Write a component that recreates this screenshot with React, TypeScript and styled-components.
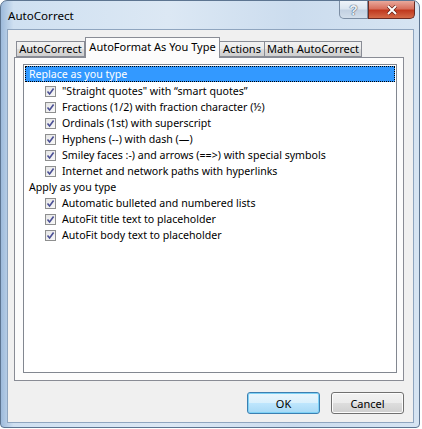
import styled, { createGlobalStyle } from "styled-components";

const GlobalStyle = createGlobalStyle`
    html, body {
        margin: 0;
        padding: 0;
        background: #ffffff;
    }
    body {
        font-family: "Noto Sans", "Liberation Sans", sans-serif;
    }
`;

const StyledWindow = styled.div`
    width: 420px;
    height: 428px;
    box-sizing: border-box;
    display: flex;
    flex-direction: column;
    border: 1px solid #5d7591;
    border-radius: 7px 7px 4px 4px;
    background: linear-gradient(90deg, #9dbadb 0%, #cfe0f1 3%, #dce8f4 40%, #cbdcee 70%, #d6e4f2 100%);
    overflow: hidden;
`;

const StyledTitleBar = styled.div`
    height: 28px;
    display: flex;
    align-items: flex-start;
    justify-content: space-between;
    padding-left: 7px;
`;

const StyledTitle = styled.span`
    font-family: "Noto Sans", sans-serif;
    font-size: 11.6px;
    color: #000;
    line-height: 30px;
`;

const StyledCaptionButtons = styled.div`
    display: flex;
    margin-right: 4px;
`;

const StyledCaptionButton = styled.div<{ $close?: boolean }>`
    width: ${({ $close }) => ($close ? "47px" : "29px")};
    height: 18px;
    box-sizing: border-box;
    display: flex;
    align-items: center;
    justify-content: center;
    border: 1px solid ${({ $close }) => ($close ? "#6b2a22" : "#7c8ea4")};
    border-top: none;
    border-radius: ${({ $close }) => ($close ? "0 0 5px 0" : "0 0 0 5px")};
    background: ${({ $close }) =>
        $close
            ? "linear-gradient(180deg, #e9a99c 0%, #d8705e 45%, #c0391f 55%, #d46a48 100%)"
            : "linear-gradient(180deg, #eef3f9 0%, #dbe5f0 45%, #c3d1e2 55%, #d2deeb 100%)"};
`;

const StyledHelpGlyph = styled.span`
    color: #e9eef5;
    font-family: "Liberation Sans", sans-serif;
    font-weight: bold;
    font-size: 14px;
    text-shadow: 0 0 1px #33475f, 0 0 1px #33475f;
`;

const StyledClient = styled.div`
    flex: 1;
    margin: 0 5px 5px 6px;
    border: 1px solid #8fa5bf;
    background: #f0f0f0;
    display: flex;
    flex-direction: column;
    padding: 7px 9px 8px 6px;
`;

const StyledTabRow = styled.div`
    display: flex;
    align-items: flex-end;
    height: 20px;
    padding-left: 2px;
    position: relative;
    z-index: 1;
`;

const StyledTab = styled.div<{ $active?: boolean; $width: number }>`
    width: ${({ $width }) => $width}px;
    box-sizing: border-box;
    height: ${({ $active }) => ($active ? "21px" : "16px")};
    margin-bottom: ${({ $active }) => ($active ? "-1px" : "0")};
    border: 1px solid #898c95;
    border-bottom: ${({ $active }) => ($active ? "none" : "1px solid #898c95")};
    border-left: ${({ $active }) => ($active ? "1px solid #898c95" : "none")};
    &:first-child {
        border-left: 1px solid #898c95;
    }
    background: ${({ $active }) =>
        $active ? "#fcfcfc" : "linear-gradient(180deg, #f2f2f2 0%, #ebebeb 50%, #dddddd 51%, #cfcfcf 100%)"};
    font-size: 11px;
    line-height: 14px;
    color: #000;
    display: flex;
    align-items: ${({ $active }) => ($active ? "flex-start" : "center")};
    justify-content: center;
    padding-top: ${({ $active }) => ($active ? "2px" : "0")};
    white-space: nowrap;
`;

const StyledPanel = styled.div`
    height: 324px;
    box-sizing: border-box;
    border: 1px solid #898c95;
    background: #fcfcfc;
    padding: 6px 6px 7px 8px;
    display: flex;
`;

const StyledList = styled.div`
    flex: 1;
    border: 1px solid #828790;
    background: #ffffff;
    padding: 1px 1px;
    display: flex;
    flex-direction: column;
`;

const StyledGroupRow = styled.div<{ $selected?: boolean }>`
    height: 16px;
    box-sizing: border-box;
    display: flex;
    align-items: center;
    padding-left: 4px;
    font-size: 10.6px;
    color: ${({ $selected }) => ($selected ? "#ffffff" : "#000000")};
    background: ${({ $selected }) => ($selected ? "#3399ff" : "transparent")};
    outline: ${({ $selected }) => ($selected ? "1px dotted #000" : "none")};
    outline-offset: -1px;
    margin-bottom: ${({ $selected }) => ($selected ? "1px" : "0")};
`;

const StyledItemRow = styled.div`
    height: 16px;
    display: flex;
    align-items: center;
    padding-left: 20px;
    gap: 6px;
    font-size: 10.6px;
    color: #000;
    white-space: nowrap;
`;

const StyledCheck = styled.span`
    width: 11px;
    height: 11px;
    box-sizing: border-box;
    border: 1px solid #8e8f8f;
    background: linear-gradient(135deg, #e5e5e5 0%, #f8f8f8 100%);
    display: inline-flex;
    align-items: center;
    justify-content: center;
    flex-shrink: 0;
`;

const StyledButtonRow = styled.div`
    display: flex;
    justify-content: flex-end;
    gap: 11px;
    margin-top: 11px;
`;

const StyledButton = styled.button<{ $default?: boolean }>`
    width: 73px;
    height: 22px;
    box-sizing: border-box;
    border: 1px solid ${({ $default }) => ($default ? "#3c7fb1" : "#707070")};
    border-radius: 3px;
    background: ${({ $default }) =>
        $default
            ? "linear-gradient(180deg, #eaf6fd 0%, #d9f0fc 50%, #bee6fd 51%, #a7d9f5 100%)"
            : "linear-gradient(180deg, #f2f2f2 0%, #ebebeb 50%, #dddddd 51%, #cfcfcf 100%)"};
    box-shadow: ${({ $default }) => ($default ? "inset 0 0 0 1px #7fd2f6" : "inset 0 0 0 1px #fcfcfc")};
    font-family: "Noto Sans", "Liberation Sans", sans-serif;
    font-size: 11px;
    color: #000;
    padding: 0;
`;

const CheckMark = () => (
    <StyledCheck>
        <svg width="9" height="9" viewBox="0 0 9 9">
            <path d="M1.5 4.5 L3.6 7 L7.6 1.5" fill="none" stroke="#4a4f94" strokeWidth="1.6" />
        </svg>
    </StyledCheck>
);

const replaceItems = [
    "\"Straight quotes\" with \u201csmart quotes\u201d",
    "Fractions (1/2) with fraction character (\u00bd)",
    "Ordinals (1st) with superscript",
    "Hyphens (--) with dash (\u2014)",
    "Smiley faces :-) and arrows (==>) with special symbols",
    "Internet and network paths with hyperlinks",
];

const applyItems = [
    "Automatic bulleted and numbered lists",
    "AutoFit title text to placeholder",
    "AutoFit body text to placeholder",
];

const tabs = [
    { label: "AutoCorrect", width: 69 },
    { label: "AutoFormat As You Type", width: 135, active: true },
    { label: "Actions", width: 45 },
    { label: "Math AutoCorrect", width: 97 },
];

export default function App() {
    return (
        <>
            <GlobalStyle />
            <StyledWindow>
                <StyledTitleBar>
                    <StyledTitle>AutoCorrect</StyledTitle>
                    <StyledCaptionButtons>
                        <StyledCaptionButton>
                            <StyledHelpGlyph>?</StyledHelpGlyph>
                        </StyledCaptionButton>
                        <StyledCaptionButton $close>
                            <svg width="12" height="10" viewBox="0 0 12 10">
                                <path d="M2 1 L10 9 M10 1 L2 9" stroke="#5a1a10" strokeWidth="3.2" />
                                <path d="M2 1 L10 9 M10 1 L2 9" stroke="#ffffff" strokeWidth="2" />
                            </svg>
                        </StyledCaptionButton>
                    </StyledCaptionButtons>
                </StyledTitleBar>
                <StyledClient>
                    <StyledTabRow>
                        {tabs.map((t) => (
                            <StyledTab key={t.label} $active={t.active} $width={t.width}>
                                {t.label}
                            </StyledTab>
                        ))}
                    </StyledTabRow>
                    <StyledPanel>
                        <StyledList>
                            <StyledGroupRow $selected>Replace as you type</StyledGroupRow>
                            {replaceItems.map((item) => (
                                <StyledItemRow key={item}>
                                    <CheckMark />
                                    {item}
                                </StyledItemRow>
                            ))}
                            <StyledGroupRow>Apply as you type</StyledGroupRow>
                            {applyItems.map((item) => (
                                <StyledItemRow key={item}>
                                    <CheckMark />
                                    {item}
                                </StyledItemRow>
                            ))}
                        </StyledList>
                    </StyledPanel>
                    <StyledButtonRow>
                        <StyledButton $default>OK</StyledButton>
                        <StyledButton>Cancel</StyledButton>
                    </StyledButtonRow>
                </StyledClient>
            </StyledWindow>
        </>
    );
}
